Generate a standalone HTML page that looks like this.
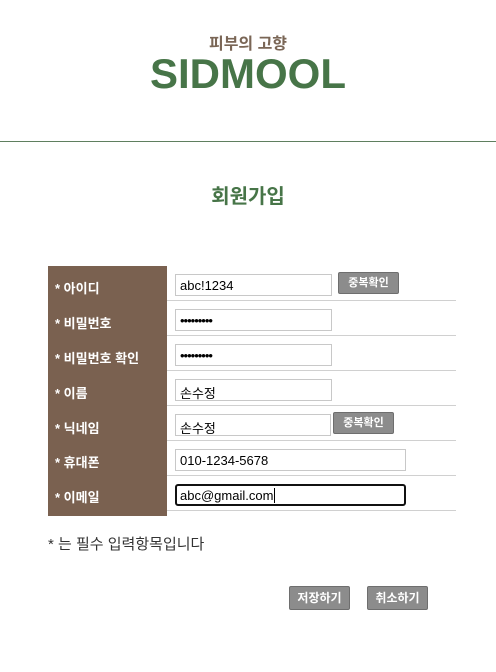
<!DOCTYPE html>
<html><head><meta charset="utf-8"><style>
*{margin:0;padding:0;box-sizing:border-box}
body{width:496px;height:672px;background:#fff;font-family:"Liberation Sans","Noto Sans CJK KR",sans-serif;position:relative;overflow:hidden}
.a{position:absolute}
.sub{left:0;width:496px;top:30px;text-align:center;font-size:16px;font-weight:bold;color:#7a6656}
.logo{left:0;width:496px;top:50px;text-align:center;font-size:42px;font-weight:bold;color:#477548;letter-spacing:0px}
.hr{left:0;top:141px;width:496px;height:1px;background:#5f7f5f}
.title{left:0;width:496px;top:180px;text-align:center;font-size:20px;font-weight:bold;color:#477548}
.lab{left:48px;top:266px;width:119px;height:250px;background:#7a6150}
.lt{left:55px;color:#fff;font-size:13px;font-weight:bold}
.line{left:167px;width:289px;height:1px;background:#d0d0d0}
.in{height:22px;border:1px solid #c8c8c8;font-size:13px;padding:3px 4px;color:#000;background:#fff}
.btn{height:22px;background:#8c8c8c;border:1px solid #6e6e6e;color:#fff;font-size:11px;font-weight:bold;text-align:center;line-height:20px;border-radius:2px}
.dots{font-size:13px;line-height:12px;letter-spacing:-1px}
</style></head><body>
<div class="a sub">피부의 고향</div>
<div class="a logo">SIDMOOL</div>
<div class="a hr"></div>
<div class="a title">회원가입</div>
<div class="a lab"></div>
<div class="a lt" style="top:278px">* 아이디</div>
<div class="a lt" style="top:313px">* 비밀번호</div>
<div class="a lt" style="top:348px">* 비밀번호 확인</div>
<div class="a lt" style="top:383px">* 이름</div>
<div class="a lt" style="top:418px">* 닉네임</div>
<div class="a lt" style="top:452px">* 휴대폰</div>
<div class="a lt" style="top:487px">* 이메일</div>
<div class="a line" style="top:300px"></div>
<div class="a line" style="top:335px"></div>
<div class="a line" style="top:370px"></div>
<div class="a line" style="top:405px"></div>
<div class="a line" style="top:440px"></div>
<div class="a line" style="top:475px"></div>
<div class="a line" style="top:510px"></div>
<div class="a in" style="left:175px;top:274px;width:157px">abc!1234</div>
<div class="a btn" style="left:338px;top:272px;width:61px">중복확인</div>
<div class="a in dots" style="left:175px;top:309px;width:157px;padding-top:5px">•••••••••</div>
<div class="a in dots" style="left:175px;top:344px;width:157px;padding-top:5px">•••••••••</div>
<div class="a in" style="left:175px;top:379px;width:157px">손수정</div>
<div class="a in" style="left:175px;top:414px;width:156px">손수정</div>
<div class="a btn" style="left:333px;top:412px;width:61px">중복확인</div>
<div class="a in" style="left:175px;top:449px;width:231px">010-1234-5678</div>
<div class="a in" style="left:175px;top:484px;width:231px;border:2px solid #111;border-radius:3px;padding:2px 3px">abc@gmail.com<span style="border-left:1px solid #000;margin-left:1px"></span></div>
<div class="a" style="left:48px;top:533px;font-size:15px;color:#333">* 는 필수 입력항목입니다</div>
<div class="a btn" style="left:289px;top:586px;width:61px;height:24px;line-height:22px;font-size:12px">저장하기</div>
<div class="a btn" style="left:367px;top:586px;width:61px;height:24px;line-height:22px;font-size:12px">취소하기</div>
</body></html>
